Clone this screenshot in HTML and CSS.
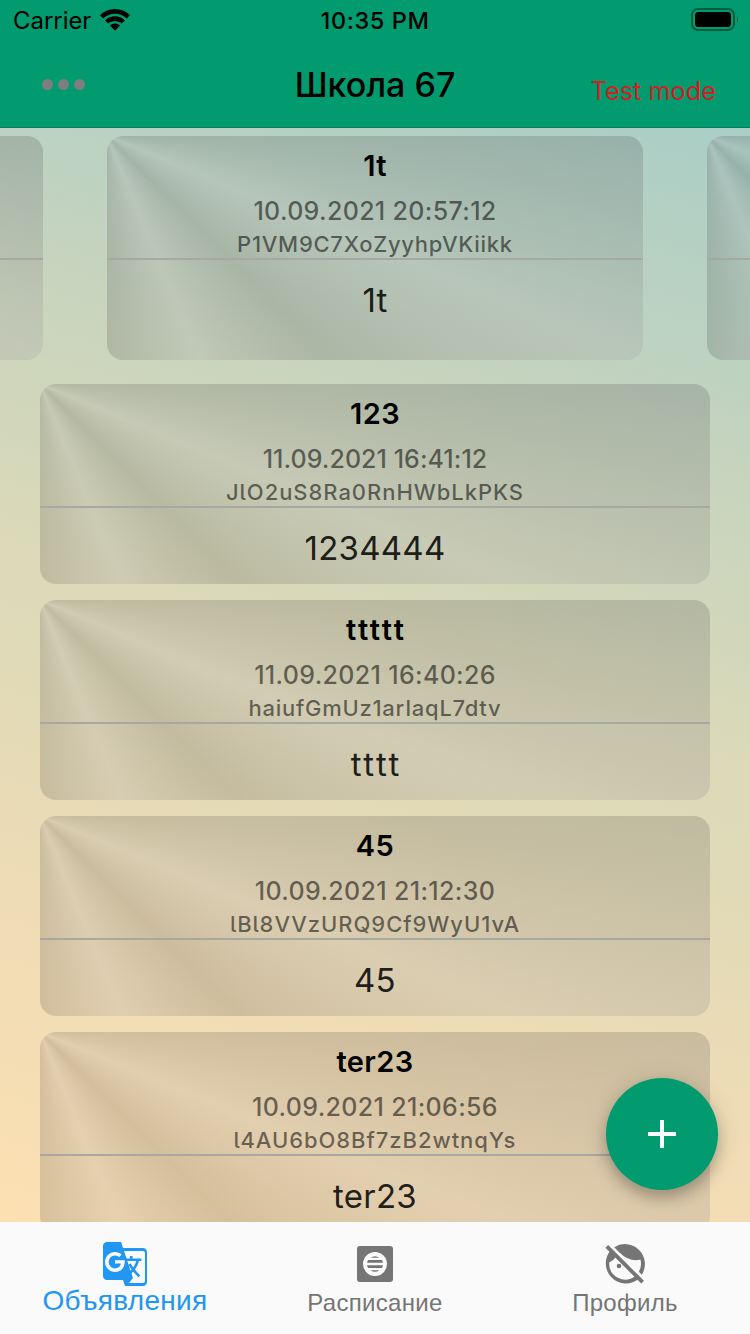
FILE: index.html
```html
<!DOCTYPE html>
<html lang="ru">
<head>
<meta charset="utf-8">
<title>Школа 67</title>
<link rel="stylesheet" href="styles.css">
</head>
<body>
<div class="app">
  <header class="header">
    <div class="status">
      <div class="carrier"><span>Carrier</span>
        <svg width="30" height="22" viewBox="0 0 30 22"><path d="M0 6.3C8-2.1 22-2.1 30 6.3L26.800 9.600C20.500 3.200 9.500 3.200 3.200 9.600Z"/><path d="M5 11.400C10.500 5.900 19.500 5.900 25 11.400L21.800 14.600C18 11 12 11 8.200 14.600Z"/><path d="M10 16.500C12.700 13.700 17.300 13.700 20 16.500L15 21.700Z"/></svg>
      </div>
      <div class="clock">10:35 PM</div>
      <div class="battery"><svg width="48" height="24" viewBox="0 0 48 24"><rect x="1" y="1" width="42" height="21" rx="6" fill="none" stroke="#000" stroke-opacity=".4" stroke-width="2"/><rect x="4" y="4" width="36" height="15" rx="3.500"/><path d="M46 8q2 3.500 0 7z" opacity=".45"/></svg></div>
    </div>
    <div class="toolbar">
      <div class="dots"><i></i><i></i><i></i></div>
      <h1 class="title">Школа 67</h1>
      <div class="mode">Test mode</div>
    </div>
  </header>
  <main class="content">
    <section class="carousel">
      <article class="card slide"><div class="card-head"></div></article>
      <article class="card slide">
        <div class="card-head"><h2>1t</h2><p class="date">10.09.2021 20:57:12</p><p class="key">P1VM9C7XoZyyhpVKiikk</p></div>
        <p class="body">1t</p>
      </article>
      <article class="card slide"><div class="card-head"></div></article>
    </section>
    <section class="list">
      <article class="card">
        <div class="card-head"><h2>123</h2><p class="date snug">11.09.2021 16:41:12</p><p class="key wide">JlO2uS8Ra0RnHWbLkPKS</p></div>
        <p class="body">1234444</p>
      </article>
      <article class="card">
        <div class="card-head"><h2 class="loose">ttttt</h2><p class="date">11.09.2021 16:40:26</p><p class="key">haiufGmUz1arIaqL7dtv</p></div>
        <p class="body loose">tttt</p>
      </article>
      <article class="card">
        <div class="card-head"><h2>45</h2><p class="date">10.09.2021 21:12:30</p><p class="key wide">lBl8VVzURQ9Cf9WyU1vA</p></div>
        <p class="body">45</p>
      </article>
      <article class="card">
        <div class="card-head"><h2>ter23</h2><p class="date">10.09.2021 21:06:56</p><p class="key wide">l4AU6bO8Bf7zB2wtnqYs</p></div>
        <p class="body">ter23</p>
      </article>
    </section>
    <button class="fab" aria-label="Добавить"><svg width="28" height="28" viewBox="0 0 28 28"><path d="M12 0h4v12h12v4H16v12h-4V16H0v-4h12z"/></svg></button>
  </main>
  <nav class="tabs">
    <div class="tab active">
      <svg width="48" height="48" viewBox="0 0 24 24"><path d="M21 4H11l-1-3H3C1.900 1 1 1.900 1 3v15c0 1.100.9 2 2 2h8l1 3h9c1.100 0 2-.9 2-2V6c0-1.100-.9-2-2-2zM7 16c-2.760 0-5-2.240-5-5s2.240-5 5-5c1.350 0 2.480.5 3.350 1.300L9.030 8.570C8.650 8.210 7.990 7.790 7 7.790c-1.740 0-3.150 1.440-3.150 3.210S5.260 14.210 7 14.210c2.010 0 2.840-1.440 2.920-2.410H7v-1.710h4.680c.7.310.12.610.12 1.020C11.800 13.970 9.890 16 7 16zM22 20.500c0 .55-.45 1-1 1h-7l2-2.500-4.500-13.500H21c.55 0 1 .45 1 1v14z"/><path d="M12.200 9.900H20.200M15.100 8V9.900M18.500 9.900C17.800 13 16 15.500 13.400 17.400M14.300 12C15.500 14.600 17 16 19.200 18.200" fill="none" stroke="currentColor" stroke-width="1.300"/></svg>
      <span>Объявления</span>
    </div>
    <div class="tab">
      <svg width="48" height="48" viewBox="0 0 24 24"><path fill-rule="evenodd" d="M4.500 3h15Q21 3 21 4.500v15q0 1.500-1.500 1.500h-15Q3 21 3 19.500v-15Q3 3 4.500 3zM12 6a6 6 0 1 0 0 12 6 6 0 0 0 0-12z"/><path d="M9.800 8.900q2.200-1.500 4.400 0zM8.500 10h7l.5 1.400H8zM8 12.600h8l-.5 1.400h-7zM9.800 15.100h4.400q-2.200 1.500-4.400 0z"/></svg>
      <span>Расписание</span>
    </div>
    <div class="tab">
      <svg width="48" height="48" viewBox="0 0 24 24"><path fill-rule="evenodd" d="M6.600 3.600A10 10 0 0 1 20.400 17.400L18.900 15.900Q20.600 13 19.700 9.800 14.200 11.100 9.200 6.200ZM5.100 4.900 8 7.800Q6.500 10.200 4.100 11.300A8 8 0 0 0 17.100 18L18.700 19.500A10 10 0 0 1 5.100 4.900Z"/><circle cx="9" cy="13" r="1.150"/><path d="M2.900 3.200 20.800 21.100" fill="none" stroke="currentColor" stroke-width="1.900"/></svg>
      <span>Профиль</span>
    </div>
  </nav>
</div>
</body>
</html>
```
FILE: styles.css
```css
* { box-sizing: border-box; margin: 0; padding: 0; }
body { width: 750px; height: 1334px; overflow: hidden; font-family: Inter, "Noto Sans", sans-serif; font-feature-settings: "calt" 0; color: #000; }
.app { display: flex; flex-direction: column; height: 1334px; }
.header { height: 128px; flex: none; background: #029a6f; border-bottom: 1px solid #087d5d; }
.status { display: grid; grid-template-columns: 1fr auto 1fr; height: 40px; padding: 0 12px; align-items: center; font-size: 24px; }
.carrier { display: flex; align-items: center; gap: 9px; letter-spacing: -.05px; padding-left: 1px; }
.clock { font-weight: 500; letter-spacing: .6px; font-size: 23.5px; }
.battery { display: flex; justify-content: flex-end; margin-right: -1px; }
.toolbar { display: grid; grid-template-columns: 1fr auto 1fr; height: 87px; align-items: center; padding: 2px 42px 0; }
.dots { display: flex; gap: 5px; }
.dots i { width: 11px; height: 11px; border-radius: 50%; background: #7e7e7e; }
.title { font-size: 34px; font-weight: 500; }
.mode { text-align: right; margin-right: -8px; color: #d32020; font-size: 25.3px; padding-top: 12px; }
.content { position: relative; height: 1094px; flex: none; overflow: hidden; background: linear-gradient(197deg, #aacec6 0%, #c7d4be 27%, #d9d9b9 46%, #f0dcb5 78%, #fce0b2 100%); }
.carousel { display: flex; gap: 64px; height: 232px; padding-top: 8px; margin-left: -493px; }
.card { flex: none; height: 200px; border-radius: 16px; overflow: hidden; text-align: center; background: conic-gradient(from 90deg at 0 0, rgba(40,35,40,.17) 0deg, rgba(160,155,160,.22) 22.500deg, rgba(40,35,40,.17) 45deg, rgba(160,155,160,.22) 67.500deg, rgba(40,35,40,.17) 90deg); }
.slide { width: 536px; height: 224px; }
.list { display: flex; flex-direction: column; gap: 16px; padding: 24px 40px 0; }
.card-head { height: 124px; padding-top: 12px; border-bottom: 2px solid #a8a8a3; }
h2 { font-size: 29px; line-height: 36px; font-weight: 600; letter-spacing: .4px; }
.date { margin-top: 11px; font-size: 25px; line-height: 32px; font-weight: 500; color: rgba(0,0,0,.54); letter-spacing: .33px; }
.date.snug { letter-spacing: .05px; }
.key { margin-top: 1px; font-size: 22px; line-height: 32px; font-weight: 500; color: rgba(0,0,0,.54); font-feature-settings: "cv05" 1; letter-spacing: .72px; }
.key.wide { letter-spacing: .95px; }
.body { font-size: 33px; line-height: 40px; padding-top: 20px; color: rgba(0,0,0,.87); letter-spacing: .25px; }
h2.loose, .body.loose { letter-spacing: 2.600px; padding-left: 2.600px; }
.fab { position: absolute; right: 32px; bottom: 32px; width: 112px; height: 112px; border: 0; border-radius: 50%; background: #029a6f; display: grid; place-items: center; box-shadow: 0 8px 14px rgba(0,0,0,.22), 0 2px 26px rgba(0,0,0,.12); }
.fab svg { fill: #fff; }
.tabs { display: grid; grid-template-columns: repeat(3, 1fr); height: 112px; background: #fafafa; color: #757575; font-family: "Liberation Sans", sans-serif; }
.tab { display: flex; flex-direction: column; align-items: center; padding-top: 18px; font-size: 24px; letter-spacing: .3px; }
.tab svg { fill: currentColor; flex: none; }
.tab span { line-height: 30px; }
.active { color: #2196f3; font-size: 28px; }
.active span { line-height: 26px; }
```
